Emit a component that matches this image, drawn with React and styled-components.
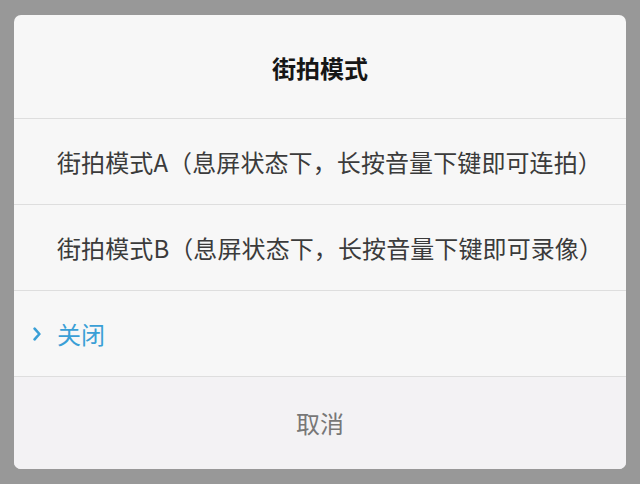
import React from "react";
import styled, { createGlobalStyle } from "styled-components";

const GlobalStyle = createGlobalStyle`
  html, body {
    margin: 0;
    padding: 0;
    background: #989898;
  }
  body {
    font-family: "Noto Sans CJK SC", "Noto Sans", sans-serif;
  }
`;

const Screen = styled.div`
  width: 640px;
  height: 484px;
  padding: 15px 14px 0 14px;
  box-sizing: border-box;
`;

const Dialog = styled.div`
  width: 612px;
  height: 454px;
  background: #f7f7f7;
  border-radius: 7px;
  overflow: hidden;
  display: flex;
  flex-direction: column;
`;

const Title = styled.div`
  height: 104px;
  display: flex;
  align-items: center;
  justify-content: center;
  font-size: 24px;
  font-weight: 700;
  color: #161616;
  border-bottom: 1px solid #dedede;
  box-sizing: border-box;
  padding-top: 2px;
`;

const Option = styled.div`
  height: 86px;
  display: flex;
  align-items: center;
  padding-left: 19px;
  gap: 16px;
  font-size: 24px;
  letter-spacing: 0.1px;
  color: ${(p) => (p.$active ? "#3a9fd6" : "#3b3b3b")};
  border-bottom: 1px solid #dedede;
  box-sizing: border-box;
  white-space: nowrap;
`;

const Marker = styled.span`
  width: 8px;
  height: 14px;
  display: flex;
  visibility: ${(p) => (p.$show ? "visible" : "hidden")};
`;

const Cancel = styled.div`
  flex: 1;
  display: flex;
  align-items: center;
  justify-content: center;
  background: #f3f2f4;
  font-size: 24px;
  color: #777;
  padding-bottom: 2px;
`;

const options = [
  { label: "街拍模式A（息屏状态下，长按音量下键即可连拍）" },
  { label: "街拍模式B（息屏状态下，长按音量下键即可录像）" },
  { label: "关闭", active: true },
];

const Chevron = () => (
  <svg width="8" height="14" viewBox="0 0 8 14">
    <path
      d="M1.6 1.6 L6.4 7 L1.6 12.4"
      fill="none"
      stroke="#3a9fd6"
      strokeWidth="2.6"
      strokeLinecap="round"
      strokeLinejoin="round"
    />
  </svg>
);

export default function App() {
  return (
    <>
      <GlobalStyle />
      <Screen>
        <Dialog>
          <Title>街拍模式</Title>
          {options.map((o) => (
            <Option key={o.label} $active={o.active}>
              <Marker $show={o.active}>
                <Chevron />
              </Marker>
              {o.label}
            </Option>
          ))}
          <Cancel>取消</Cancel>
        </Dialog>
      </Screen>
    </>
  );
}
